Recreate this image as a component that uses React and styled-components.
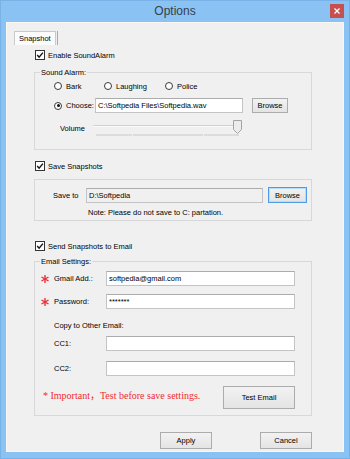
import React from "react";
import styled, { createGlobalStyle } from "styled-components";

const GlobalStyle = createGlobalStyle`
  body {
    margin: 0;
    font-family: "Liberation Sans", Arial, sans-serif;
    font-size: 7.5px;
    color: #000;
  }
`;

const Window = styled.div`
  width: 350px;
  height: 459px;
  background: #8ac3f3;
  box-shadow: inset 0 0 0 1px #78b2e6;
  display: flex;
  flex-direction: column;
`;

const TitleBar = styled.div`
  height: 22px;
  display: grid;
  grid-template-columns: 1fr auto 1fr;
`;

const Title = styled.div`
  grid-column: 2;
  line-height: 22px;
  font-size: 12px;
  color: #34404c;
`;

const CloseButton = styled.div`
  grid-column: 3;
  justify-self: end;
  margin: 4px 6px 0 0;
  width: 14px;
  height: 14px;
  background: #c7504f;
  display: flex;
  align-items: center;
  justify-content: center;
`;

const Client = styled.div`
  flex: 1;
  margin: 0 6px 7px;
  background: #f0f0f0;
  box-shadow: inset 1px 0 0 #fbf6ef, inset -1px 0 0 #fbf6ef, inset 0 -1px 0 #fbf6ef,
    inset 0 1px 0 #fbf6ef;
  display: flex;
  flex-direction: column;
`;

const TabStrip = styled.div`
  margin: 9px 0 0 8px;
  display: flex;
`;

const Tab = styled.div`
  box-sizing: border-box;
  width: 42px;
  height: 14px;
  padding-left: 4px;
  line-height: 13px;
  border: 1px solid #c9c9c9;
  border-bottom: none;
  background: #fbfbfb;
`;

const TabRule = styled.div`
  width: 1px;
  height: 14px;
  margin-left: 1px;
  background: #a9a9a9;
`;

const Page = styled.div`
  padding: 0 32px 0 28px;
  display: flex;
  flex-direction: column;
`;

const CheckRow = styled.div`
  margin-top: ${p => p.top}px;
  margin-left: 1px;
  height: 10px;
  display: flex;
  align-items: center;
  gap: 3px;
`;

const Group = styled.div`
  position: relative;
  margin-top: ${p => p.top}px;
  padding: ${p => p.pad};
  border: 1px solid #d8d8d8;
  display: flex;
  flex-direction: column;
`;

const GroupTitle = styled.div`
  position: absolute;
  top: -5px;
  left: 5px;
  padding: 0 1px;
  line-height: 9px;
  background: #f0f0f0;
`;

const RadioRow = styled.div`
  height: 14px;
  padding-left: 19px;
  display: grid;
  grid-template-columns: 50px 61px auto;
  align-items: center;
`;

const RadioItem = styled.label`
  display: flex;
  align-items: center;
  gap: 4px;
  width: ${p => (p.width ? `${p.width}px` : "auto")};
`;

const Radio = styled.span`
  box-sizing: border-box;
  width: 8px;
  height: 8px;
  border: 1px solid #3a3a3a;
  border-radius: 50%;
  background: #fff;
  display: flex;
  align-items: center;
  justify-content: center;
  &::after {
    content: "";
    display: ${p => (p.checked ? "block" : "none")};
    width: 3px;
    height: 3px;
    border-radius: 50%;
    background: #111;
  }
`;

const FieldRow = styled.div`
  margin-top: ${p => p.top || 0}px;
  padding-left: ${p => p.indent}px;
  display: flex;
  align-items: center;
`;

const FieldLabel = styled.div`
  width: ${p => p.width}px;
  flex: none;
`;

const TextBox = styled.input`
  box-sizing: border-box;
  width: ${p => p.width}px;
  height: 15px;
  padding: 0 2px;
  margin: 0;
  font: inherit;
  color: #000;
  border: 1px solid #c4c4c4;
  border-top-color: #acacac;
  background: ${p => (p.disabledLook ? "#f0f0f0" : "#fff")};
  outline: none;
`;

const Button = styled.button`
  box-sizing: border-box;
  width: ${p => p.width}px;
  height: ${p => p.height}px;
  margin: 0 0 0 ${p => p.gap || 0}px;
  padding: 0;
  font: inherit;
  color: #000;
  border: 1px solid ${p => (p.focused ? "#4a9de6" : "#acacac")};
  box-shadow: ${p => (p.focused ? "inset 0 0 0 1px #b9dcf8" : "none")};
  background: linear-gradient(#f2f2f2, #e4e4e4);
`;

const VolumeRow = styled.div`
  margin-top: 6px;
  padding-left: 25px;
  display: flex;
  align-items: flex-start;
`;

const VolumeLabel = styled.div`
  width: 33px;
  margin-top: 5px;
  line-height: 10px;
`;

const Note = styled.div`
  margin-top: 5px;
  padding-left: 53px;
  line-height: 10px;
`;

const StarCell = styled.div`
  width: 13px;
  flex: none;
  display: flex;
  align-items: center;
`;

const Caption = styled.div`
  margin-top: 12px;
  padding-left: 19px;
  line-height: 10px;
`;

const ActionRow = styled.div`
  margin-top: 10px;
  padding: 0 16px 0 8px;
  display: flex;
  justify-content: space-between;
  align-items: flex-start;
`;

const Warning = styled.div`
  margin-top: 3px;
  line-height: 13px;
  font-family: "Liberation Serif", "Noto Sans CJK SC", serif;
  font-size: 10px;
  color: #f02a30;
`;

const Footer = styled.div`
  margin-top: 16px;
  display: flex;
  justify-content: flex-end;
  gap: 48px;
`;

const CheckBox = ({ checked }) => (
  <svg width="10" height="10" viewBox="0 0 10 10">
    <rect x="0.5" y="0.5" width="9" height="9" fill="#fff" stroke="#333" />
    {checked && (
      <path d="M2.2 5 L4.1 7.2 L7.9 2.6" fill="none" stroke="#111" strokeWidth="1.4" />
    )}
  </svg>
);

const Star = () => (
  <svg width="8" height="8" viewBox="0 0 8 8">
    <g stroke="#e8323a" strokeWidth="1.4">
      <line x1="4" y1="0" x2="4" y2="8" />
      <line x1="0.5" y1="2" x2="7.5" y2="6" />
      <line x1="0.5" y1="6" x2="7.5" y2="2" />
    </g>
  </svg>
);

const VolumeSlider = () => (
  <svg width="150" height="17" viewBox="0 0 150 17">
    <line x1="0" y1="6.5" x2="147" y2="6.5" stroke="#d2d2d2" />
    <line x1="0" y1="7.5" x2="147" y2="7.5" stroke="#fbfbfb" />
    <path d="M140.5 1.5 H148.5 V10.5 L144.5 14.5 L140.5 10.5 Z" fill="#ececec" stroke="#a3a3a3" />
    <g stroke="#d6d6d6" strokeWidth="1.5">
      <line x1="3" y1="16" x2="39" y2="16" />
      <line x1="40" y1="16" x2="110" y2="16" />
      <line x1="111" y1="16" x2="146" y2="16" />
    </g>
  </svg>
);

export default function App() {
  return (
    <>
      <GlobalStyle />
      <Window>
        <TitleBar>
          <Title>Options</Title>
          <CloseButton>
            <svg width="6" height="6" viewBox="0 0 6 6">
              <path d="M0.5 0.5 L5.5 5.5 M5.5 0.5 L0.5 5.5" stroke="#fff" strokeWidth="1.3" />
            </svg>
          </CloseButton>
        </TitleBar>
        <Client>
          <TabStrip>
            <Tab>Snapshot</Tab>
            <TabRule />
          </TabStrip>
          <Page>
            <CheckRow top={5}>
              <CheckBox checked />
              <span>Enable SoundAlarm</span>
            </CheckRow>
            <Group top={12} pad="6px 0 13px">
              <GroupTitle>Sound Alarm:</GroupTitle>
              <RadioRow>
                <RadioItem>
                  <Radio />
                  Bark
                </RadioItem>
                <RadioItem>
                  <Radio />
                  Laughing
                </RadioItem>
                <RadioItem>
                  <Radio />
                  Police
                </RadioItem>
              </RadioRow>
              <FieldRow top={5} indent={19}>
                <RadioItem width={41}>
                  <Radio checked />
                  Choose:
                </RadioItem>
                <TextBox width={148} readOnly value="C:\Softpedia Files\Softpedia.wav" />
                <Button width={36} height={15} gap={9}>
                  Browse
                </Button>
              </FieldRow>
              <VolumeRow>
                <VolumeLabel>Volume</VolumeLabel>
                <VolumeSlider />
              </VolumeRow>
            </Group>

            <CheckRow top={11}>
              <CheckBox checked />
              <span>Save Snapshots</span>
            </CheckRow>
            <Group top={8} pad="7px 0 2px">
              <FieldRow indent={18}>
                <FieldLabel width={33}>Save to</FieldLabel>
                <TextBox width={177} disabledLook readOnly value="D:\Softpedia" />
                <Button width={39} height={16} gap={5} focused>
                  Browse
                </Button>
              </FieldRow>
              <Note>Note: Please do not save to C: partation.</Note>
            </Group>

            <CheckRow top={20}>
              <CheckBox checked />
              <span>Send Snapshots to Email</span>
            </CheckRow>
            <Group top={10} pad="9px 0 6px">
              <GroupTitle>Email Settings:</GroupTitle>
              <FieldRow indent={6}>
                <StarCell>
                  <Star />
                </StarCell>
                <FieldLabel width={52}>Gmail Add.:</FieldLabel>
                <TextBox width={189} readOnly value="softpedia@gmail.com" />
              </FieldRow>
              <FieldRow top={8} indent={6}>
                <StarCell>
                  <Star />
                </StarCell>
                <FieldLabel width={52}>Password:</FieldLabel>
                <TextBox width={189} readOnly value="*******" />
              </FieldRow>
              <Caption>Copy to Other Email:</Caption>
              <FieldRow top={5} indent={19}>
                <FieldLabel width={52}>CC1:</FieldLabel>
                <TextBox width={189} readOnly value="" />
              </FieldRow>
              <FieldRow top={10} indent={19}>
                <FieldLabel width={52}>CC2:</FieldLabel>
                <TextBox width={189} readOnly value="" />
              </FieldRow>
              <ActionRow>
                <Warning>* Important，Test before save settings.</Warning>
                <Button width={72} height={23}>
                  Test Email
                </Button>
              </ActionRow>
            </Group>

            <Footer>
              <Button width={52} height={17}>
                Apply
              </Button>
              <Button width={52} height={17}>
                Cancel
              </Button>
            </Footer>
          </Page>
        </Client>
      </Window>
    </>
  );
}
